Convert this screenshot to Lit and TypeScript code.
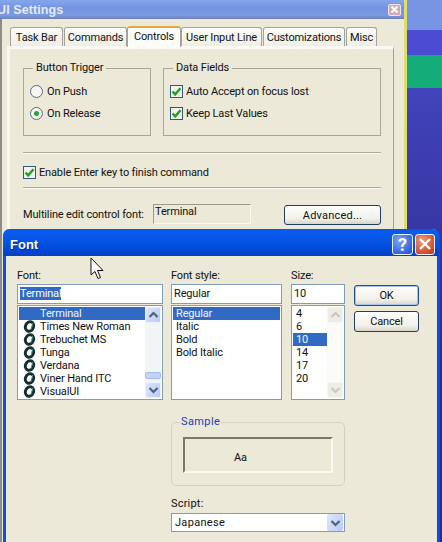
import { LitElement, html, css } from "lit";
import { customElement } from "lit/decorators.js";

const check = html`<span class="box"><svg width="11" height="11" viewBox="0 0 11 11"><path d="M1.5 5.5 4.2 8.4 9.5 2.2" fill="none" stroke="#21a121" stroke-width="2.4"/></svg></span>`;
const arrow = (up: boolean, color: string) => html`<svg width="11" height="8" viewBox="0 0 11 8"><path d="${up ? "M1.5 6 5.5 2 9.5 6" : "M1.5 2 5.5 6 9.5 2"}" fill="none" stroke="${color}" stroke-width="2.2"/></svg>`;
const fontIcon = html`<svg class="ic" width="18" height="13" viewBox="0 0 18 13"><ellipse cx="7.5" cy="6.5" rx="4" ry="4.9" transform="rotate(22 7.5 6.5)" fill="none" stroke="#12302f" stroke-width="3"/><path d="M10.8 2.8 9 9.5" stroke="#4a8a8c" stroke-width="1" fill="none"/></svg>`;

@customElement("app-root")
export class AppRoot extends LitElement {
  static styles = css`
    :host { display: block; position: relative; width: 442px; height: 542px; overflow: hidden;
      font-family: Roboto, "Liberation Sans", Arial, sans-serif; font-size: 11px; letter-spacing: -0.15px; color: #111; background: #35359f; }
    .desktop { position: absolute; inset: 0 0 0 404px; display: flex; flex-direction: column;
      border-left: 3px solid #dede6a; }
    .d1 { height: 30px; background: #7795e2; }
    .d2 { height: 25px; background: #4c4cd2; }
    .d3 { height: 33px; background: repeating-conic-gradient(#2f9c62 0 25%, #18b07c 0 50%) 0 0/2px 2px; }
    .d4 { flex: 1; background: linear-gradient(#4343bb, #2b2b8f 60%); }

    .settings { position: absolute; left: 0; top: 0; width: 404px; height: 542px; box-sizing: border-box;
      background: #ece9d8; border-left: 2px solid #8d8c86; display: flex; flex-direction: column; }
    .s-title { height: 19px; flex: none; margin-left: -2px; background: linear-gradient(#86a6ea, #7394e2 40%, #7c9ae2 80%, #6d80b8);
      display: flex; align-items: center; justify-content: space-between; padding: 0 3px 0 0; }
    .s-title b { margin-left: -3px; color: #e4ebf8; font-family: "Liberation Sans", Arial, sans-serif; font-size: 12.5px; letter-spacing: 0.1px; }
    .s-close { width: 13px; height: 12px; border-radius: 2px; background: #d8a8ba; border: 1px solid #f0e4ea; box-sizing: border-box;
      display: flex; align-items: center; justify-content: center; }
    .s-body { padding: 7px 0 0 5px; }
    .tabs { display: flex; padding-left: 3px; height: 20px; align-items: flex-end; position: relative; z-index: 1; }
    .tab { height: 19px; box-sizing: border-box; border: 1px solid #a3a39a; border-bottom: none; border-radius: 3px 3px 0 0;
      background: linear-gradient(#fdfdfb, #f0efe6); display: flex; align-items: center; justify-content: center;
      margin-right: 1px; white-space: nowrap; }
    .tab.on { height: 21px; background: #fcfcfa; border-top: 2px solid #eba53a; margin-bottom: -1px; margin-right: 0; margin-left: -1px; padding-bottom: 3px; }
    .panel { width: 387px; box-sizing: border-box; height: 190px; background: #ece9d8;
      border: 1px solid #a3a39a; border-left: 3px solid #f8f7f0; border-top: 3px solid #fbfaf4;
      padding: 12px 12px 0 13px; }
    .groups { display: grid; grid-template-columns: 128px 218px; column-gap: 12px; }
    fieldset { margin: 0; min-width: 0; box-sizing: border-box; }
    .g { border: 1px solid #a8a89a; height: 75px; padding: 9px 0 0 6px; display: flex; flex-direction: column; gap: 8px; }
    .g legend { padding: 0 3px; margin-left: 3px; line-height: 14px; }
    .row { display: flex; align-items: center; gap: 3px; height: 14px; white-space: nowrap; }
    .radio { width: 13px; height: 13px; border-radius: 50%; border: 1px solid #52708f; background: #f6f5ee; box-sizing: border-box;
      display: flex; align-items: center; justify-content: center; margin-right: 1px; }
    .radio i { width: 5px; height: 5px; border-radius: 50%; background: #25a63a; }
    .box { width: 13px; height: 13px; flex: none; box-sizing: border-box; border: 1px solid #2d5a7e; background: #f3f3ea;
      display: flex; align-items: center; justify-content: center; }
    .sep { height: 1px; background: #adac9c; border-bottom: 1px solid #fbfaf2; width: 358px; }
    .s1 { margin-top: 16px; }
    .enter { margin: 11px 0 8px 0; }
    .multi { display: flex; align-items: flex-start; margin-top: 15px; }
    .multi .lbl { width: 130px; margin-top: 4px; white-space: nowrap; }
    .ro { width: 98px; height: 20px; box-sizing: border-box; border: 1px solid; border-color: #9a9a8c #fbfaf2 #fbfaf2 #9a9a8c; padding-left: 1px; line-height: 14px; }
    .btn { box-sizing: border-box; border: 1px solid #1e3f66; border-radius: 3px; background: linear-gradient(#fefefe, #f2f1ea 70%, #d8d6c8);
      display: flex; align-items: center; justify-content: center; color: #111; }
    .adv { width: 97px; height: 20px; margin-left: 33px; margin-top: 1px; letter-spacing: 0.2px; padding-top: 1px; }

    .dialog { position: absolute; left: 3px; top: 229px; width: 437px; height: 330px; box-sizing: border-box;
      background: #ece9d8; border: solid #0b4fdc; border-width: 0 3px 0 3px; border-radius: 7px 7px 0 0; }
    .d-title { height: 27px; margin: 0 -2px 0 -3px; border-radius: 7px 7px 0 0; box-sizing: border-box;
      background: linear-gradient(#0b55e0, #0a5cf0 12%, #0553e2 50%, #0245d2 85%, #0a3fb8);
      display: flex; align-items: center; justify-content: space-between; padding: 3px 4px 0 7px; }
    .d-title b { color: #fff; font-family: "Liberation Sans", Arial, sans-serif; font-size: 13px; letter-spacing: 0; text-shadow: 1px 1px 1px #08288c; }
    .d-btns { display: flex; gap: 2px; }
    .dbtn { width: 20px; height: 21px; box-sizing: border-box; border: 1px solid #eef2fb; border-radius: 3px;
      display: flex; align-items: center; justify-content: center; color: #fff; font-weight: bold; font-size: 18px; }
    .help { width: 21px; background: radial-gradient(circle at 35% 30%, #7ba5f2, #2a5ddb 80%); }
    .x { background: radial-gradient(circle at 35% 30%, #ee9a7e, #d0431d 80%); }
    .d-body { display: grid; grid-template-columns: 146px 111px 55px 66px; column-gap: 8px; padding: 0 0 0 11px; }
    .col { display: flex; flex-direction: column; }
    .c3 { margin-left: 1px; }
    .c4 { margin-left: 1px; padding-top: 29px; gap: 5px; }
    .col label { height: 14px; line-height: 14px; margin: 13px 0 1px; display: block; }
    .edit { height: 20px; box-sizing: border-box; background: #fff; border: 1px solid #7f9db9; padding: 0 2px; line-height: 18px; }
    .edit mark { background: #316ac5; color: #fff; }
    .list { height: 95px; box-sizing: border-box; margin-top: 1px; background: #fff; border: 1px solid #7f9db9; display: flex; padding: 1px; }
    .items { flex: 1; min-width: 0; }
    .it { height: 13px; line-height: 14px; padding-left: 3px; white-space: nowrap; display: flex; }
    .it.sel { background: #316ac5; color: #f2f5fc; }
    .ic { width: 18px; height: 13px; flex: none; }
    .sb { width: 16px; flex: none; display: flex; flex-direction: column; background: #f3f4f5; }
    .sb .sbb { height: 16px; flex: none; border-radius: 2px; background: linear-gradient(120deg, #dfe8fb, #b7caf3); border: 1px solid #eef2fb; box-sizing: border-box;
      display: flex; align-items: center; justify-content: center; }
    .sb .tr { flex: 1; display: flex; flex-direction: column; justify-content: flex-end; padding-bottom: 3px; }
    .thumb { height: 7px; border-radius: 2px; background: #c3d3f6; border: 1px solid #a5bbe9; box-sizing: border-box; }
    .sb.off { background: #fbfbf9; }
    .sb.off .sbb { background: #eeede5; border-color: #f7f7f2; }
    .ok { height: 21px; border-color: #1e4d8e; box-shadow: inset 0 0 0 1px #a9c4ee; }
    .cancel { height: 21px; }
    .bottom { grid-column: 2 / span 2; display: flex; flex-direction: column; }
    .sample { margin-top: 15px; height: 71px; border: 1px solid #d3d2c1; border-radius: 5px; padding: 8px 11px 0 11px; }
    .sample legend { color: #1a44b0; padding: 0 1px; margin-left: -3px; line-height: 14px; letter-spacing: 0.4px; }
    .sbox { height: 36px; box-sizing: border-box; border: 2px solid; border-color: #7a7868 #fbfaf2 #fbfaf2 #7a7868;
      display: flex; align-items: center; padding: 5px 0 0 49px; font-size: 11px; }
    .slab { margin-top: 11px; line-height: 14px; letter-spacing: 0.2px; }
    .combo { height: 19px; margin-top: 2px; box-sizing: border-box; background: #fff; border: 1px solid #7f9db9; display: flex; align-items: center; justify-content: space-between; padding: 0 1px 0 3px; letter-spacing: 0.3px; }
    .combo .sbb { width: 16px; height: 17px; border-radius: 2px; background: linear-gradient(120deg, #dfe8fb, #b7caf3); display: flex; align-items: center; justify-content: center; }
    .cursor { position: absolute; left: 90px; top: 257px; }
  `;

  render() {
    const fonts = ["Times New Roman", "Trebuchet MS", "Tunga", "Verdana", "Viner Hand ITC", "VisualUI"];
    return html`
      <div class="desktop"><div class="d1"></div><div class="d2"></div><div class="d3"></div><div class="d4"></div></div>
      <div class="settings">
        <div class="s-title"><b>UI Settings</b>
          <span class="s-close"><svg width="9" height="9" viewBox="0 0 9 9"><path d="M1.5 1.5 7.5 7.5M7.5 1.5 1.5 7.5" stroke="#fff" stroke-width="2"/></svg></span></div>
        <div class="s-body">
          <div class="tabs">
            <div class="tab" style="width:53px">Task Bar</div>
            <div class="tab" style="width:63px">Commands</div>
            <div class="tab on" style="width:54px">Controls</div>
            <div class="tab" style="width:81px">User Input Line</div>
            <div class="tab" style="width:82px">Customizations</div>
            <div class="tab" style="width:31px">Misc</div>
          </div>
          <div class="panel">
            <div class="groups">
              <fieldset class="g"><legend>Button Trigger</legend>
                <div class="row"><span class="radio"></span>On Push</div>
                <div class="row"><span class="radio"><i></i></span>On Release</div>
              </fieldset>
              <fieldset class="g"><legend>Data Fields</legend>
                <div class="row">${check}Auto Accept on focus lost</div>
                <div class="row">${check}Keep Last Values</div>
              </fieldset>
            </div>
            <div class="sep s1"></div>
            <div class="row enter">${check}Enable Enter key to finish command</div>
            <div class="sep"></div>
            <div class="multi"><span class="lbl">Multiline edit control font:</span><div class="ro">Terminal</div><div class="btn adv">Advanced...</div></div>
          </div>
        </div>
      </div>
      <div class="dialog">
        <div class="d-title"><b>Font</b><div class="d-btns"><span class="dbtn help">?</span>
          <span class="dbtn x"><svg width="14" height="14" viewBox="0 0 14 14"><path d="M2 2 12 12M12 2 2 12" stroke="#fff" stroke-width="2.4"/></svg></span></div></div>
        <div class="d-body">
          <div class="col"><label>Font:</label><div class="edit"><mark>Terminal</mark></div>
            <div class="list"><div class="items">
              <div class="it sel"><span class="ic"></span>Terminal</div>
              ${fonts.map((f) => html`<div class="it">${fontIcon}${f}</div>`)}
            </div><div class="sb"><div class="sbb">${arrow(true, "#4d6185")}</div><div class="tr"><div class="thumb"></div></div><div class="sbb">${arrow(false, "#4d6185")}</div></div></div></div>
          <div class="col"><label>Font style:</label><div class="edit">Regular</div>
            <div class="list"><div class="items">
              <div class="it sel">Regular</div><div class="it">Italic</div><div class="it">Bold</div><div class="it">Bold Italic</div>
            </div></div></div>
          <div class="col c3"><label>Size:</label><div class="edit">10</div>
            <div class="list"><div class="items">
              <div class="it">4</div><div class="it">6</div><div class="it sel">10</div><div class="it">14</div><div class="it">17</div><div class="it">20</div>
            </div><div class="sb off"><div class="sbb">${arrow(true, "#c9c8ba")}</div><div class="tr"></div><div class="sbb">${arrow(false, "#c9c8ba")}</div></div></div></div>
          <div class="col c4"><div class="btn ok">OK</div><div class="btn cancel">Cancel</div></div>
          <div></div>
          <div class="bottom">
            <fieldset class="sample"><legend>Sample</legend><div class="sbox">Aa</div></fieldset>
            <div class="slab">Script:</div>
            <div class="combo">Japanese<span class="sbb">${arrow(false, "#4d6185")}</span></div>
          </div>
        </div>
      </div>
      <svg class="cursor" width="14" height="23" viewBox="0 0 14 23"><path d="M1 1V18L5 14.5 8 21.5 10.5 20.5 7.5 13.5H13Z" fill="#fff" stroke="#111" stroke-width="1"/></svg>
    `;
  }
}
